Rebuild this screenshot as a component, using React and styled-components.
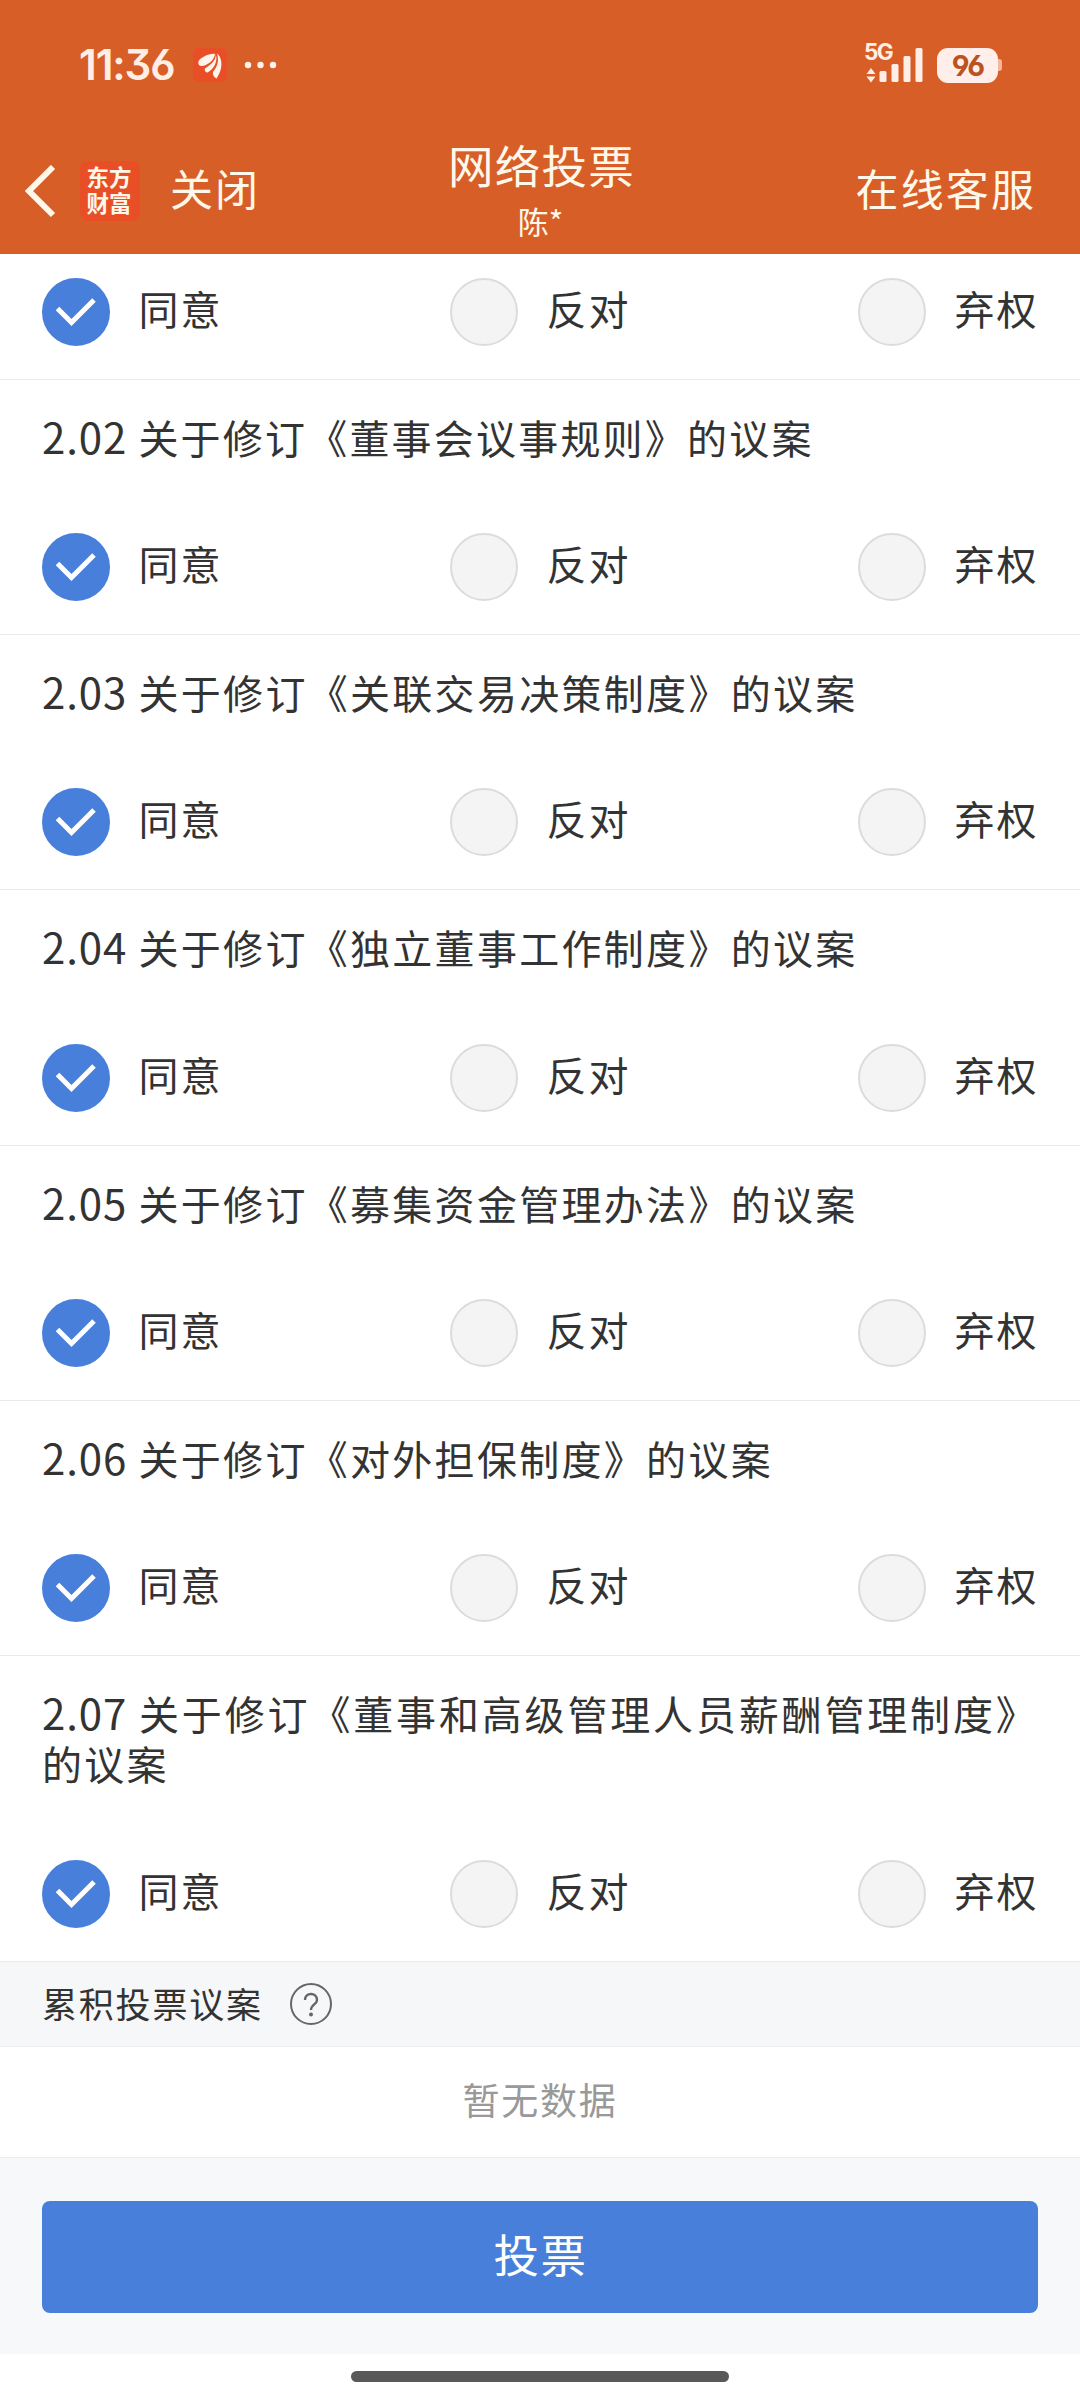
import styled, { createGlobalStyle } from "styled-components";
import { useState } from "react";

const GlobalStyle = createGlobalStyle`
  * {
    box-sizing: border-box;
  }
  body {
    margin: 0;
    background: #fff;
    color: #333;
    font-family: "Noto Sans CJK SC", sans-serif;
  }
`;

const Page = styled.div`
  width: 1080px;
  height: 2400px;
  display: flex;
  flex-direction: column;
  overflow: hidden;
`;

const Header = styled.header`
  height: 254px;
  background: #d75f27;
  color: #fff8ea;
  flex-shrink: 0;
`;

const StatusBar = styled.div`
  height: 130px;
  padding: 0 78px 0 79px;
  display: flex;
  align-items: center;
  justify-content: space-between;
`;

const StatusGroup = styled.div`
  display: flex;
  align-items: center;
`;

const Time = styled.span`
  width: 114px;
  font-family: Inter, sans-serif;
  font-size: 42px;
  font-weight: 600;
  line-height: 50px;
  letter-spacing: -1.1px;
  font-feature-settings: "cv03", "cv04", "cv09";
  color: #ffeee6;
`;

const NavBar = styled.div`
  height: 124px;
  padding: 0 24px;
  display: grid;
  grid-template-columns: 1fr auto 1fr;
  align-items: center;
`;

const NavLeft = styled.div`
  display: flex;
  align-items: center;
`;

const Logo = styled.div`
  width: 60px;
  height: 60px;
  margin: 0 30px 2px 24px;
  padding: 2px 2px 0 0;
  border-radius: 8px;
  background: #e94f26;
  font-size: 22.5px;
  font-weight: 700;
  line-height: 26px;
  text-align: center;
`;

const NavText = styled.span`
  padding-bottom: 10px;
  padding-right: ${(props) => (props.$align ? "20px" : "0")};
  font-size: 43px;
  line-height: 60px;
  letter-spacing: 2.1px;
  text-align: ${(props) => props.$align || "left"};
`;

const TitleBox = styled.div`
  padding: 0 0 4px 3px;
  text-align: center;
`;

const Title = styled.h1`
  margin: 0;
  font-size: 45.5px;
  font-weight: 400;
  line-height: 58px;
  letter-spacing: 1.2px;
`;

const SubTitle = styled.div`
  padding: 5px 2px 1px 0;
  font-size: 31px;
  line-height: 46px;
`;

const Proposal = styled.section`
  flex-shrink: 0;
  height: ${(props) => props.$height}px;
  padding: 0 42px;
  border-bottom: 1px solid #ebebeb;
  display: flex;
  flex-direction: column;
  justify-content: space-between;
`;

const ProposalTitle = styled.h2`
  margin: 0;
  padding-top: 32px;
  font-size: 40px;
  font-weight: 400;
  line-height: 50px;
  letter-spacing: ${(props) => props.$spacing}px;
  text-align: justify;
`;

const ProposalNo = styled.span`
  font-size: 42px;
  line-height: 1;
  letter-spacing: 0.9px;
`;

const Options = styled.div`
  display: flex;
  justify-content: space-between;
  padding-bottom: 33px;
`;

const Option = styled.button`
  width: 180px;
  padding: 0;
  border: none;
  background: none;
  display: flex;
  align-items: center;
  color: inherit;
  font-family: inherit;
`;

const Radio = styled.span`
  width: 68px;
  height: 68px;
  flex-shrink: 0;
  border-radius: 50%;
  border: 2px solid ${(props) => (props.$checked ? "#487fdb" : "#dcdcdc")};
  background: ${(props) => (props.$checked ? "#487fdb" : "#f4f4f4")};
  display: flex;
`;

const OptionLabel = styled.span`
  margin: -8px 0 0 28.5px;
  font-size: 40px;
  line-height: 56px;
  letter-spacing: 2px;
  white-space: nowrap;
`;

const SectionBar = styled.div`
  flex-shrink: 0;
  height: 85px;
  padding: 0 42px;
  display: flex;
  align-items: center;
  gap: 27px;
  background: #f6f7f9;
  border-bottom: 1px solid #eceef0;
`;

const SectionTitle = styled.span`
  padding-bottom: 4px;
  font-size: 35px;
  letter-spacing: 1.8px;
`;

const Empty = styled.div`
  flex-shrink: 0;
  height: 111px;
  border-bottom: 1px solid #ececec;
  color: #999;
  font-size: 37px;
  line-height: 104px;
  letter-spacing: 1.8px;
  text-align: center;
`;

const Footer = styled.div`
  flex-shrink: 0;
  height: 196px;
  padding: 43px 42px 0;
  background: #f7f8f9;
`;

const VoteButton = styled.button`
  width: 100%;
  height: 112px;
  padding: 0 0 8px 1px;
  border: none;
  border-radius: 8px;
  background: #487fdb;
  color: #fff;
  font-family: inherit;
  font-size: 45.5px;
  letter-spacing: 1.5px;
`;

const HomeBar = styled.div`
  width: 378px;
  height: 11px;
  margin: 17px auto 0;
  border-radius: 6px;
  background: #595959;
`;

const proposals = [
  { id: "2.01", height: 126 },
  { id: "2.02", title: "关于修订《董事会议事规则》的议案", height: 255, spacing: 2.2 },
  { id: "2.03", title: "关于修订《关联交易决策制度》的议案", height: 255, spacing: 2.3 },
  { id: "2.04", title: "关于修订《独立董事工作制度》的议案", height: 256, spacing: 2.3 },
  { id: "2.05", title: "关于修订《募集资金管理办法》的议案", height: 255, spacing: 2.3 },
  { id: "2.06", title: "关于修订《对外担保制度》的议案", height: 255, spacing: 2.3 },
  { id: "2.07", title: "关于修订《董事和高级管理人员薪酬管理制度》的议案", height: 306, spacing: 2.2 },
];

const choices = ["同意", "反对", "弃权"];

const AppIcon = () => (
  <svg width="34" height="34" viewBox="0 0 34 34">
    <rect width="34" height="34" rx="5" fill="#e94f26" />
    <g fill="#fff3ea">
      <path d="M22 6C17 5 6 10 5.3 14C5 17 7 18 8.5 18C14 17.5 21 13 22 6Z" />
      <path d="M22.8 6.5C23 13 17 17 12 20.5C11 22.5 13 24.5 14.5 24.5C21 21 25 13 22.8 6.5Z" />
      <path d="M24 5.5C29 9 31 20 23.5 30.5C20.5 29 19.5 26 20 24C24 19 26.5 13 24 5.5Z" />
    </g>
  </svg>
);

const DotsIcon = styled.svg`
  width: 34px;
  height: 8px;
  margin-left: 17px;
`;

const Dots = () => (
  <DotsIcon viewBox="0 0 34 8">
    <circle cx="4" cy="4" r="3.2" fill="#fff3ea" />
    <circle cx="16.5" cy="4" r="3.2" fill="#fff3ea" />
    <circle cx="29" cy="4" r="3.2" fill="#fff3ea" />
  </DotsIcon>
);

const SignalBox = styled.div`
  display: grid;
  grid-template-areas: "stack";
  height: 50px;
  width: 60px;
  > * {
    grid-area: stack;
  }
`;

const Network = styled.span`
  align-self: start;
  color: #ffeee6;
  font-family: Inter, sans-serif;
  font-size: 22.5px;
  font-weight: 700;
  line-height: 24px;
  letter-spacing: -1.6px;
`;

const Signal = () => (
  <SignalBox>
    <Network>5G</Network>
    <svg width="60" height="50" viewBox="0 -4 60 50">
      <g fill="#ffeee6">
        <path d="M7 24L11.5 30H2.5Z M7 38.5L2.5 32.5H11.5Z" />
        <rect x="15.5" y="27" width="7" height="11" rx="1.5" />
        <rect x="27.5" y="20" width="7" height="18" rx="1.5" />
        <rect x="39.5" y="12" width="7" height="26" rx="1.5" />
        <rect x="51.5" y="4" width="7" height="34" rx="1.5" />
      </g>
    </svg>
  </SignalBox>
);

const Battery = styled.div`
  width: 61px;
  height: 35px;
  margin-left: 13px;
  border-radius: 11px;
  background: #ffeee9;
  color: #b9531f;
  font-family: Inter, sans-serif;
  font-size: 29px;
  font-weight: 700;
  line-height: 35px;
  letter-spacing: -2px;
  text-align: center;
  font-feature-settings: "cv03", "cv04";
`;

const BatteryTip = styled.div`
  width: 4px;
  height: 12px;
  border-radius: 0 3px 3px 0;
  background: #f3b79d;
`;

const BackIcon = () => (
  <svg width="32" height="54" viewBox="0 0 32 54">
    <path d="M29 2L5 26L29 50" fill="none" stroke="#fff8ea" strokeWidth="6" />
  </svg>
);

const CheckIcon = () => (
  <svg width="64" height="64" viewBox="0 0 64 64">
    <path d="M13.5 28.5L27.5 42.5L50 20" fill="none" stroke="#fff" strokeWidth="5" />
  </svg>
);

const HelpIcon = () => (
  <svg width="42" height="42" viewBox="0 0 42 42" fill="none" stroke="#666">
    <circle cx="21" cy="21" r="20" strokeWidth="2" />
    <path d="M15 17C15 9 27 9 27 17C27 21.5 21 21.5 21 27" strokeWidth="2.4" />
    <circle cx="21" cy="31.5" r="2" fill="#666" stroke="none" />
  </svg>
);

function App() {
  const [votes, setVotes] = useState({});

  const handleVote = (id, choice) => {
    setVotes({ ...votes, [id]: choice });
  };

  return (
    <Page>
      <GlobalStyle />
      <Header>
        <StatusBar>
          <StatusGroup>
            <Time>11:36</Time>
            <AppIcon />
            <Dots />
          </StatusGroup>
          <StatusGroup>
            <Signal />
            <Battery>96</Battery>
            <BatteryTip />
          </StatusGroup>
        </StatusBar>
        <NavBar>
          <NavLeft>
            <BackIcon />
            <Logo>东方<br />财富</Logo>
            <NavText>关闭</NavText>
          </NavLeft>
          <TitleBox>
            <Title>网络投票</Title>
            <SubTitle>陈*</SubTitle>
          </TitleBox>
          <NavText $align="right">在线客服</NavText>
        </NavBar>
      </Header>
      {proposals.map((item) => (
        <Proposal key={item.id} $height={item.height}>
          {item.title ? (
            <ProposalTitle $spacing={item.spacing}>
              <ProposalNo>{item.id}</ProposalNo> {item.title}
            </ProposalTitle>
          ) : (
            <span />
          )}
          <Options>
            {choices.map((choice) => {
              const checked = (votes[item.id] || "同意") === choice;
              return (
                <Option key={choice} onClick={() => handleVote(item.id, choice)}>
                  <Radio $checked={checked}>{checked && <CheckIcon />}</Radio>
                  <OptionLabel>{choice}</OptionLabel>
                </Option>
              );
            })}
          </Options>
        </Proposal>
      ))}
      <SectionBar>
        <SectionTitle>累积投票议案</SectionTitle>
        <HelpIcon />
      </SectionBar>
      <Empty>暂无数据</Empty>
      <Footer>
        <VoteButton>投票</VoteButton>
      </Footer>
      <HomeBar />
    </Page>
  );
}

export default App;
